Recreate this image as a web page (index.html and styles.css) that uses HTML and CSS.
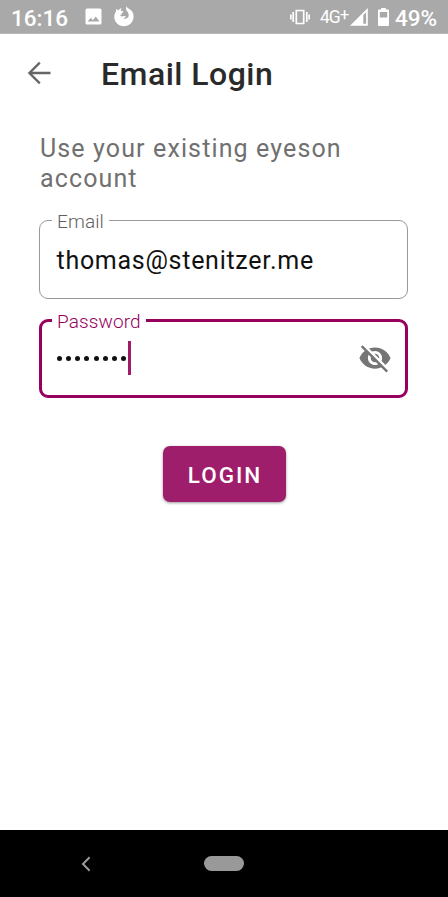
FILE: index.html
```html
<!DOCTYPE html>
<html lang="en">
<head>
<meta charset="utf-8">
<title>Email Login</title>
<link rel="stylesheet" href="styles.css">
</head>
<body>
<div class="status">
  <span class="clock">16:16</span>
  <svg class="photo" width="17" height="17" viewBox="0 0 17 17"><path fill="#fff" fill-rule="evenodd" d="M2 .5h13A1.500 1.500 0 0 1 16.500 2v13a1.500 1.500 0 0 1-1.500 1.500H2A1.500 1.500 0 0 1 .5 15V2A1.500 1.500 0 0 1 2 .5ZM2.500 13.500h12L10.800 8.500l-3 3.800-2-2.500Z"/></svg>
  <svg class="fox" width="20" height="21" viewBox="0 0 20 21"><path fill="#fff" d="M2.100 3c.7.700 1.500 1.100 2.400 1.200C5.500 3 6.600 2.300 8 2.200 7 3.200 6.700 4 6.900 4.900l2.500.4c.2.800-.6 1.200-1.600 1.800l-.2 1.500-1.300.2c0 1 .8 1.700 1.700 1.600l2-.5c1.200-.1 1.700.6 2 .9-.8.100-1.200 1.200-2.800 1.600 2.900 1 5.300-.6 5.500-3.200.1-2.400-1.300-3.400-2-4.500C11.700 3.200 11.800 1.600 12.800.2c.2 1.300 1 2 2.200 2.600 2.900 1.700 4.800 4.500 4.600 8.200-.4 5.300-4.600 9.300-9.700 9.300C4.600 20.300.4 16.300.3 11.100.2 8.800.9 6.900 2.100 5.300Z"/></svg>
  <svg class="vibrate" width="20" height="16" viewBox="0 0 20 16"><path fill="none" stroke="#fff" stroke-width="1.700" d="M6.300 1.500h7.400v13H6.300zM3.200 3v10M16.800 3v10M.8 5.500v5M19.200 5.500v5"/></svg>
  <span class="net">4G<span class="plus">+</span></span>
  <svg class="signal" width="18" height="18" viewBox="0 0 18 18"><path fill="#fff" fill-rule="evenodd" d="M17.800 0v17.700H0ZM13.300 7v8.800h2.800V4.200Z"/></svg>
  <svg class="battery" width="11" height="18" viewBox="0 0 11 18"><path fill="#fff" fill-rule="evenodd" d="M3.200 0h4.600v1.600H10a1 1 0 0 1 1 1V17a1 1 0 0 1-1 1H1a1 1 0 0 1-1-1V2.600a1 1 0 0 1 1-1h2.200ZM1.800 4v5.500h7.400V4Z"/></svg>
  <span class="percent">49%</span>
</div>
<header class="bar">
  <svg width="24" height="24" viewBox="0 0 24 24"><path fill="none" stroke="#666" stroke-width="2.300" d="M23.500 12H2.500M12.800 1.600 2.400 12l10.400 10.400"/></svg>
  <h1>Email Login</h1>
</header>
<main>
  <p class="intro">Use your existing eyeson<br>account</p>
  <fieldset class="field">
    <legend>Email</legend>
    <div class="value">thomas@stenitzer.me</div>
  </fieldset>
  <fieldset class="field active">
    <legend>Password</legend>
    <div class="value">
      <span class="dots"><i></i><i></i><i></i><i></i><i></i><i></i><i></i><i></i></span>
      <span class="caret"></span>
      <svg class="eye" width="34" height="34" viewBox="0 0 24 24">
        <mask id="cut"><path fill="#fff" d="M0 0h24v24H0z"/><path stroke="#000" stroke-width="2" d="m2.300 1.200 21 21"/></mask>
        <path mask="url(#cut)" fill="#757575" d="M12 4.500C7 4.500 2.730 7.610 1 12c1.730 4.390 6 7.500 11 7.500s9.270-3.110 11-7.500c-1.730-4.390-6-7.500-11-7.500zM12 17c-2.760 0-5-2.240-5-5s2.240-5 5-5 5 2.240 5 5-2.240 5-5 5zm0-8c-1.660 0-3 1.340-3 3s1.340 3 3 3 3-1.340 3-3-1.340-3-3-3z"/>
        <path stroke="#757575" stroke-width="1.800" d="M2.600 3.600 20.600 21.600"/>
      </svg>
    </div>
  </fieldset>
  <button class="login" type="button">LOGIN</button>
</main>
<nav>
  <svg width="10" height="16" viewBox="0 0 10 16"><path fill="none" stroke="#999" stroke-width="2" d="M8.600 1.300 2 8l6.600 6.700"/></svg>
  <span class="home"></span>
</nav>
</body>
</html>
```
FILE: styles.css
```css
* { box-sizing: border-box; }
body {
  margin: 0;
  height: 897px;
  display: flex;
  flex-direction: column;
  background: #fff;
  font-family: Roboto, sans-serif;
  overflow: hidden;
}
svg { display: block; flex: none; }
.status {
  height: 34px;
  flex: none;
  display: flex;
  align-items: center;
  padding: 0 0 0 11px;
  background: #a9a9a9;
  border-bottom: 1px solid #b8b8b8;
  color: #fff;
  white-space: nowrap;
}
.clock { width: 74px; font-size: 22.500px; font-weight: 500; line-height: 34px; padding-top: 2px; }
.fox { margin-left: 12px; }
.vibrate { margin-left: 156px; }
.net { width: 31px; margin-left: 10px; font-size: 17.500px; letter-spacing: -1px; }
.plus { font-size: 17px; vertical-align: 3px; line-height: 1px; }
.signal { margin-left: -1px; }
.battery { margin-left: 10px; }
.percent { margin-left: 6px; font-size: 22.500px; font-weight: 500; padding-top: 2px; }
.bar {
  height: 78px;
  flex: none;
  display: flex;
  align-items: center;
  padding-left: 27px;
}
.bar h1 {
  margin: 2px 0 0 50px;
  font-size: 32px;
  font-weight: 500;
  line-height: 40px;
  letter-spacing: 0.480px;
  color: #2a2a2a;
}
main { flex: 1; padding: 0 40px 0 39px; display: flex; flex-direction: column; }
.intro {
  margin: 22px 0 16px;
  padding-left: 1px;
  font-size: 25px;
  line-height: 30px;
  letter-spacing: 1.120px;
  color: #707070;
}
.field {
  width: 369px;
  height: 89px;
  margin: 0 0 11px;
  padding: 0 14px;
  border: 1px solid #999;
  border-radius: 9px;
}
legend {
  height: 20px;
  margin-left: -2px;
  padding: 0 5px;
  font-size: 19px;
  font-weight: 300;
  line-height: 23px;
  letter-spacing: 0.120px;
  color: #606060;
}
.value {
  display: flex;
  align-items: center;
  height: 60px;
  padding-left: 2.500px;
  font-size: 25px;
  letter-spacing: 0.720px;
  color: #111;
}
.active { height: 88px; padding: 0 12px; border: 3px solid #98005d; }
.active legend { color: #98005d; }
.active .value { height: 56px; }
.dots { display: flex; gap: 4.150px; padding-left: 0.500px; }
.dots i { width: 5px; height: 5px; border-radius: 50%; background: #111; }
.caret { width: 3px; height: 34px; margin-left: 2.500px; background: #a01c6a; }
.eye { margin: 0 1.500px 0 auto; }
.login {
  align-self: center;
  width: 123px;
  height: 56px;
  margin: 37px 0 0 1px;
  padding: 2px 0 0 2px;
  border: 0;
  border-radius: 7px;
  background: #9e1e6c;
  box-shadow: 0 1px 3px rgba(0, 0, 0, 0.400);
  color: #fff;
  font: 500 22.500px Roboto, sans-serif;
  letter-spacing: 2px;
}
nav {
  height: 67px;
  flex: none;
  display: flex;
  align-items: center;
  padding-left: 81px;
  background: #000;
}
.home { width: 40px; height: 15px; margin-left: 113px; border-radius: 8px; background: #999; }
```
